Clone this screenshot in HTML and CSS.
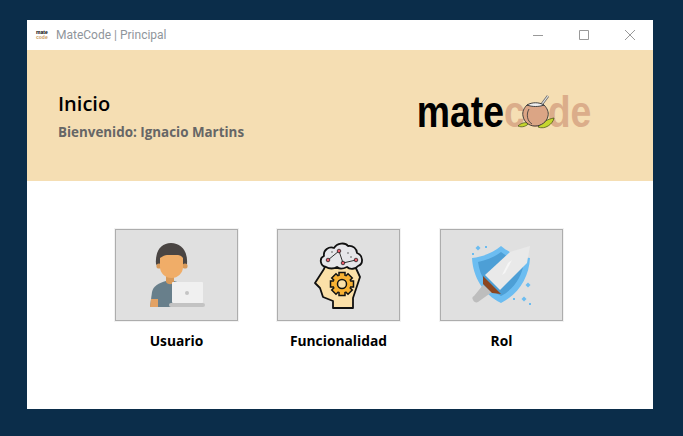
FILE: index.html
```html
<!DOCTYPE html>
<html lang="en">
<head>
    <meta charset="UTF-8">
    <meta name="viewport" content="width=device-width, initial-scale=1.0">
    <title>MateCode | Principal</title>
    <link rel="stylesheet" href="styles.css">
</head>
<body>
    <div class="window">
        <div class="titlebar">
            <div class="app-icon">
                <span class="app-icon-top">mate</span>
                <span class="app-icon-bottom">code</span>
            </div>
            <span class="app-title">MateCode | Principal</span>
            <div class="win-controls">
                <svg class="win-btn" width="12" height="12" viewBox="0 0 12 12"><path d="M1 6.5h10" stroke="#999" fill="none"/></svg>
                <svg class="win-btn" width="12" height="12" viewBox="0 0 12 12"><path d="M1.5 1.5h9v9h-9z" stroke="#999" fill="none"/></svg>
                <svg class="win-btn" width="12" height="12" viewBox="0 0 12 12"><path d="M1 1l10 10M11 1L1 11" stroke="#999" fill="none"/></svg>
            </div>
        </div>

        <div class="banner">
            <div class="greeting">
                <h1>Inicio</h1>
                <p>Bienvenido: Ignacio Martins</p>
            </div>
            <div class="logo">
                <div class="logo-text"><span class="logo-mate">mate</span><span class="logo-code">code</span></div>
                <svg class="logo-cup" width="38" height="36" viewBox="0 0 38 36">
                    <path d="M0 32c3-3 7-4 11-3-2 3-7 5-11 3z" fill="#c5d62e" stroke="#3c4a10" stroke-width=".7"/>
                    <path d="M20 33c4-5 10-8 16-9-1 6-9 12-16 9z" fill="#c5d62e" stroke="#3c4a10" stroke-width=".7"/>
                    <path d="M24 10L30 2" stroke="#666" stroke-width="2.6" fill="none"/>
                    <path d="M24 10L30 2" stroke="#e4e4e4" stroke-width="1.2" fill="none"/>
                    <path d="M9 11c-3 3-5 7-4 11 1 6 6 10 12 10s12-4 13-10c1-4-1-8-4-11z" fill="#dba585" stroke="#333" stroke-width=".9"/>
                    <path d="M9 11c5-3 12-3 17 0-5 2-12 2-17 0z" fill="#eee" stroke="#333" stroke-width=".9"/>
                    <path d="M11 15c-3 5-2 12 3 15" stroke="#333" stroke-width=".8" fill="none"/>
                </svg>
            </div>
        </div>

        <div class="menu">
            <div class="menu-item">
                <div class="tile">
                    <svg width="56" height="66" viewBox="0 0 56 66">
                        <path d="M1 65L3 50c1-6 7-9 14-11h8l10 3v23z" fill="#687f8b"/>
                        <path d="M2 57h7v8H1z" fill="#e3a264"/>
                        <path d="M17 32h8v8c-2 3-6 3-8 0z" fill="#d89a5a"/>
                        <path d="M7 22C6 9 12 1 22 1s17 8 16 21l-2 3H9z" fill="#4a4543"/>
                        <circle cx="10" cy="24" r="2.6" fill="#d89a5a"/>
                        <circle cx="36" cy="24" r="2.6" fill="#d89a5a"/>
                        <path d="M11 16c3-2 5-3 7-3h11c1 0 4 1 5 3v9c0 6-5 11-11.500 11S11 31 11 25z" fill="#f0ad68"/>
                        <rect x="23" y="40" width="31" height="21" rx="1" fill="#f0f0f0"/>
                        <circle cx="38" cy="51" r="2" fill="#c4c4c4"/>
                        <rect x="20" y="61" width="36" height="4" rx="2" fill="#c3c3c3"/>
                    </svg>
                </div>
                <span class="tile-label">Usuario</span>
            </div>
            <div class="menu-item">
                <div class="tile">
                    <svg width="50" height="68" viewBox="0 0 50 68">
                        <path d="M1 42L10 28 12 23H40L46 36 39 57V67H19V60L9 56 6 47z" fill="#fbe0a8" stroke="#111" stroke-width="1.800" stroke-linejoin="round"/>
                        <path d="M12 26c-6-1-7-9-2-11-1-6 5-10 10-8 3-5 11-6 14-2 5-1 9 3 9 7 6 2 7 11 1 13-2 3-8 4-11 1-4 2-8 2-10 0-3 2-8 2-11 0z" fill="#e6e6ea" stroke="#111" stroke-width="1.800" stroke-linejoin="round"/>
                        <path d="M14 19L25 10 29 22 42 19" stroke="#333" stroke-width="1" fill="none"/>
                        <circle cx="14" cy="19" r="1.800" fill="#e85c6a" stroke="#111" stroke-width=".7"/>
                        <circle cx="25" cy="10" r="1.800" fill="#e85c6a" stroke="#111" stroke-width=".7"/>
                        <circle cx="29" cy="22" r="1.800" fill="#e85c6a" stroke="#111" stroke-width=".7"/>
                        <circle cx="42" cy="19" r="1.800" fill="#e85c6a" stroke="#111" stroke-width=".7"/>
                        <circle cx="18" cy="11" r=".8" fill="#555"/>
                        <circle cx="34" cy="12" r=".8" fill="#555"/>
                        <circle cx="37" cy="16" r=".8" fill="#555"/>
                        <g transform="translate(28 43)">
                            <rect x="-3" y="-11.500" width="6" height="23" fill="#f8b133" stroke="#111" stroke-width="1.500"/>
                            <rect x="-3" y="-11.500" width="6" height="23" fill="#f8b133" stroke="#111" stroke-width="1.500" transform="rotate(45)"/>
                            <rect x="-3" y="-11.500" width="6" height="23" fill="#f8b133" stroke="#111" stroke-width="1.500" transform="rotate(90)"/>
                            <rect x="-3" y="-11.500" width="6" height="23" fill="#f8b133" stroke="#111" stroke-width="1.500" transform="rotate(135)"/>
                            <circle r="8.500" fill="#f8b133"/>
                            <circle r="4.500" fill="#fbe0a8" stroke="#111" stroke-width="1.500"/>
                        </g>
                    </svg>
                </div>
                <span class="tile-label">Funcionalidad</span>
            </div>
            <div class="menu-item">
                <div class="tile">
                    <svg width="60" height="60" viewBox="0 0 60 60">
                        <path d="M6 .5l2.500 2.500L6 5.500 3.500 3z" fill="#6cbcf0"/>
                        <rect x="13" y="1" width="2" height="2" fill="#6cbcf0"/>
                        <rect x="0" y="8" width="2" height="2" fill="#6cbcf0"/>
                        <path d="M56 37.500l2.500 2.500-2.500 2.500-2.500-2.500z" fill="#6cbcf0"/>
                        <path d="M52 51.500l2.500 2.500-2.500 2.500-2.500-2.500z" fill="#6cbcf0"/>
                        <rect x="41" y="53" width="2" height="2" fill="#6cbcf0"/>
                        <rect x="57" y="58" width="2" height="2" fill="#6cbcf0"/>
                        <path d="M29 1C22 7 11 12 0 13c1 19 11 36 29 45 18-9 28-26 29-45-11-1-22-6-29-12z" fill="#6cbdf1"/>
                        <path d="M29 7C23 12 15 15 6 17c2 15 10 27 23 34 13-7 21-19 23-34-9-2-17-5-23-10z" fill="#4d9fd6"/>
                        <path d="M11 40L20 47 6 57c-2 1-4 0-5-2s-1-3 1-4z" fill="#bdbdbd"/>
                        <path d="M13 30L38 7 58 1 55 18 28 45z" fill="#e9e9e9"/>
                        <path d="M36 18L40 15 33 28 30 30z" fill="#f6f6f6"/>
                        <path d="M11 31L29 49 20 48 11 39z" fill="#8c4620"/>
                    </svg>
                </div>
                <span class="tile-label">Rol</span>
            </div>
        </div>
    </div>
</body>
</html>
```

FILE: styles.css
```css
body {
    margin: 0;
    height: 436px;
    overflow: hidden;
    background-color: #0b2d4a;
    font-family: "Open Sans", sans-serif;
}
.window {
    width: 626px;
    height: 389px;
    margin: 20px 0 0 27px;
    background-color: #fff;
}
.titlebar {
    display: flex;
    align-items: center;
    height: 30px;
    padding-left: 9px;
}
.app-icon {
    display: flex;
    flex-direction: column;
    width: 13px;
    margin-right: 7px;
    font-family: "Liberation Sans", sans-serif;
    font-size: 5px;
    font-weight: bold;
    line-height: 5px;
}
.app-icon-bottom {
    color: #c79a60;
}
.app-title {
    font-family: Roboto, sans-serif;
    font-size: 12px;
    color: #8f959b;
}
.win-controls {
    display: flex;
    gap: 34px;
    margin-left: auto;
    padding-right: 17px;
}
.banner {
    display: flex;
    align-items: center;
    justify-content: space-between;
    height: 131px;
    padding: 0 62px 0 31px;
    background-color: #f5deb3;
}
.greeting h1 {
    margin: 0 0 6px;
    font-size: 20px;
    font-weight: 600;
    color: #000;
}
.greeting p {
    margin: 0;
    font-size: 13.4px;
    font-weight: 700;
    color: #666;
}
.logo {
    position: relative;
}
.logo-text {
    margin-bottom: 8px;
    font-family: "Liberation Sans", sans-serif;
    font-size: 44px;
    font-weight: bold;
    line-height: 40px;
    transform: scaleX(.85);
    transform-origin: right center;
}
.logo-mate {
    color: #000;
}
.logo-code {
    color: #dbad8a;
}
.logo-cup {
    position: absolute;
    right: 35px;
    top: 2px;
}
.menu {
    display: flex;
    justify-content: center;
    gap: 39px;
    padding: 48px 2px 0 0;
}
.menu-item {
    display: flex;
    flex-direction: column;
    align-items: center;
    gap: 10px;
}
.menu-item:last-child {
    margin-left: 1px;
}
.tile {
    display: flex;
    align-items: center;
    justify-content: center;
    box-sizing: border-box;
    width: 123px;
    height: 92px;
    background-color: #e0e0e0;
    border: 1px solid #adadad;
    box-shadow: 0 0 0 1px #f2f2f2;
}
.tile-label {
    font-size: 13.8px;
    font-weight: 700;
    color: #000;
}
```
